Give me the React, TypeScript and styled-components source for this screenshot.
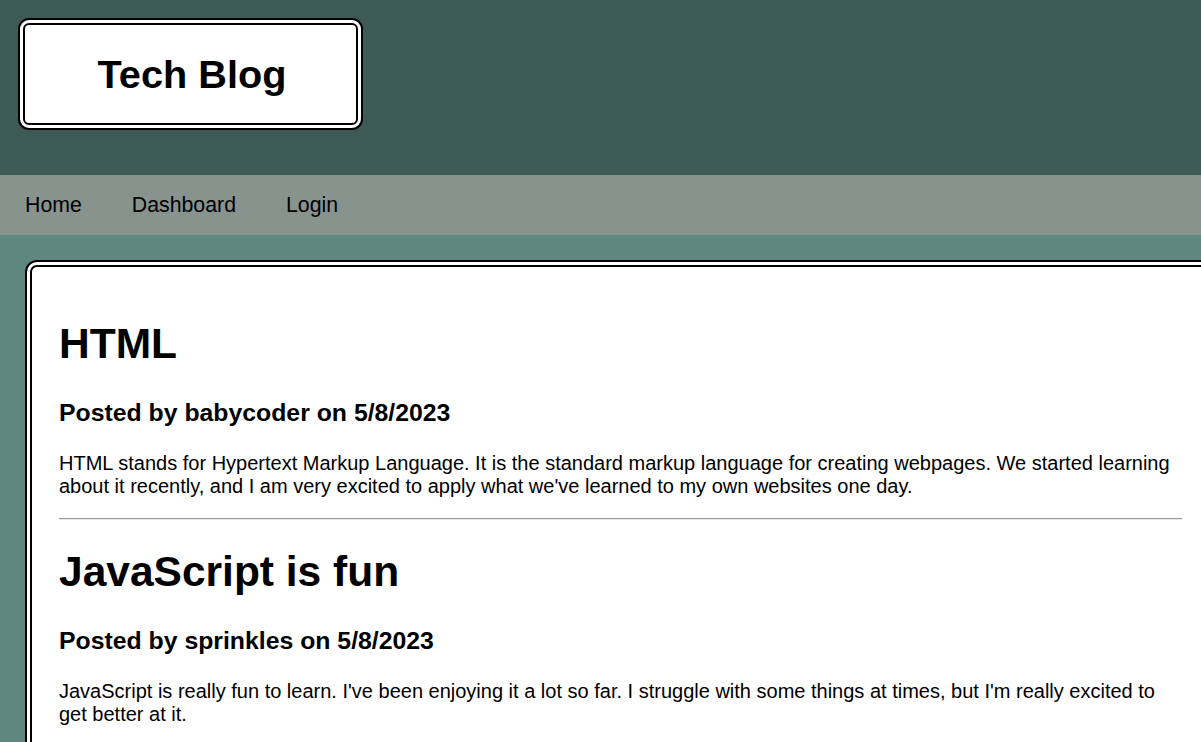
import React from "react";
import styled, { createGlobalStyle } from "styled-components";

const Global = createGlobalStyle`
  html, body {
    margin: 0;
    padding: 0;
    overflow: hidden;
  }
  body {
    font-family: "Liberation Sans", Arial, sans-serif;
    color: #000;
    background: #5e887f;
  }
`;

const Page = styled.div`
  height: 100vh;
  display: flex;
  flex-direction: column;
  overflow: hidden;
`;

const Header = styled.header`
  flex: 0 0 175px;
  box-sizing: border-box;
  padding: 18px 0 0 18px;
  background: #3d5a54;
`;

const TitleBox = styled.div`
  width: 345px;
  height: 112px;
  box-sizing: border-box;
  border: 7px double #000;
  border-radius: 11px;
  background: #fff;
  display: flex;
  align-items: center;
  justify-content: center;
`;

const Title = styled.h1`
  margin: 0 0 0 3px;
  font-size: 39.7px;
  font-weight: 700;
`;

const Nav = styled.nav`
  flex: 0 0 60px;
  display: flex;
  align-items: center;
  background: #88938d;
`;

const NavLink = styled.a`
  padding: 0 25px;
  font-size: 21.3px;
  color: #000;
  text-decoration: none;
  cursor: pointer;
`;

const Main = styled.main`
  flex: 1 1 auto;
  min-height: 0;
  overflow: hidden;
  padding: 25px 0 0 25px;
  background: #5e887f;
`;

const Card = styled.section`
  width: 1191px;
  min-height: 520px;
  box-sizing: border-box;
  border: 7px double #000;
  border-radius: 12px;
  background: #fff;
  padding: 53px 27px 28px;
`;

const PostTitle = styled.h1`
  margin: 0;
  font-size: 42.5px;
  font-weight: 700;
`;

const Meta = styled.h2`
  margin: 31px 0 0;
  font-size: 24.8px;
  font-weight: 700;
`;

const Body = styled.p`
  margin: 25px 0 0;
  font-size: 20px;
  line-height: 23px;
`;

const Divider = styled.hr`
  margin: 20px 0 28px;
  border: none;
  border-top: 1px solid #9a9a9a;
  border-bottom: 1px solid #e6e6e6;
  height: 0;
`;

const posts = [
  {
    title: "HTML",
    author: "babycoder",
    date: "5/8/2023",
    body:
      "HTML stands for Hypertext Markup Language. It is the standard markup language for creating webpages. We started learning about it recently, and I am very excited to apply what we've learned to my own websites one day.",
  },
  {
    title: "JavaScript is fun",
    author: "sprinkles",
    date: "5/8/2023",
    body:
      "JavaScript is really fun to learn. I've been enjoying it a lot so far. I struggle with some things at times, but I'm really excited to get better at it.",
  },
];

export default function App() {
  return (
    <Page>
      <Global />
      <Header>
        <TitleBox>
          <Title>Tech Blog</Title>
        </TitleBox>
      </Header>
      <Nav>
        <NavLink>Home</NavLink>
        <NavLink>Dashboard</NavLink>
        <NavLink>Login</NavLink>
      </Nav>
      <Main>
        <Card>
          {posts.map((p, i) => (
            <article key={p.title}>
              {i > 0 && <Divider />}
              <PostTitle>{p.title}</PostTitle>
              <Meta>
                Posted by {p.author} on {p.date}
              </Meta>
              <Body>{p.body}</Body>
            </article>
          ))}
        </Card>
      </Main>
    </Page>
  );
}
